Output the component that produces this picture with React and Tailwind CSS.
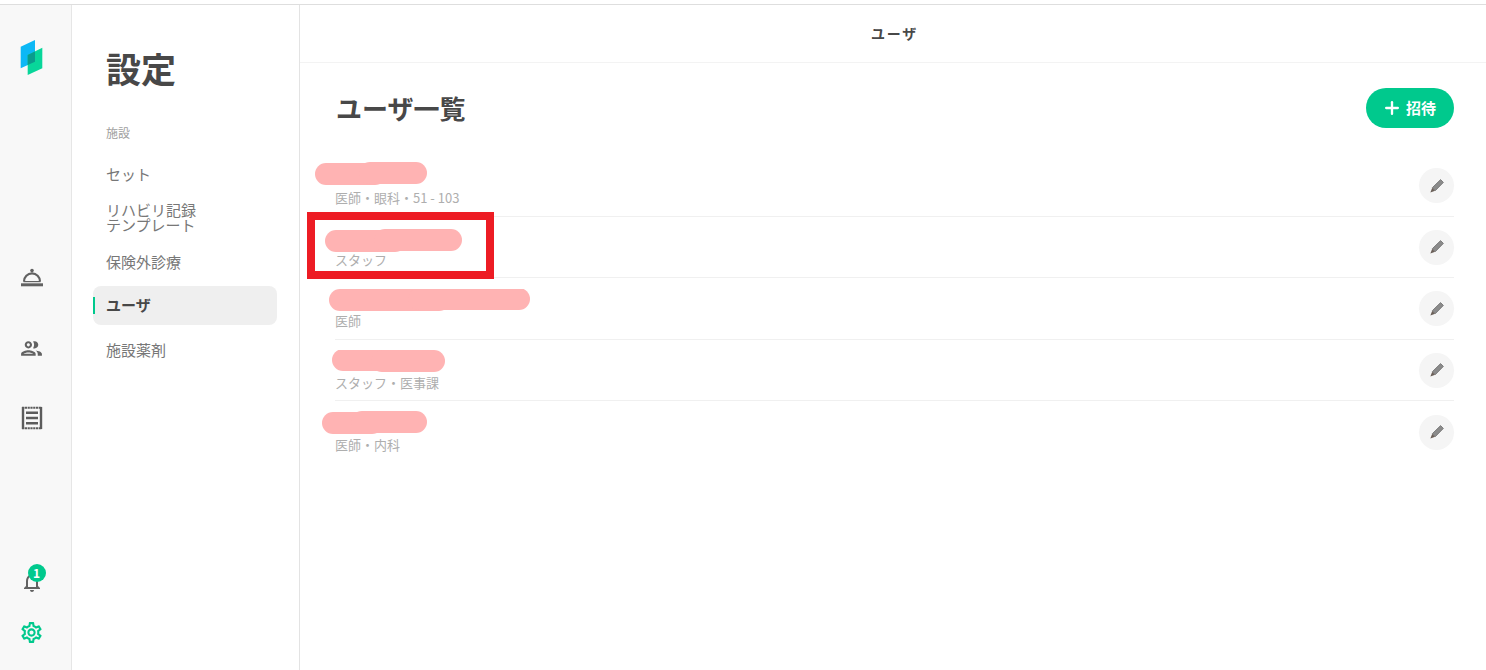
import React from "react";
import { MdOutlinePeople, MdOutlineNotifications, MdOutlineSettings } from "react-icons/md";
import { Plus } from "lucide-react";

const font = { fontFamily: '"Noto Sans CJK JP", "Noto Sans", sans-serif' };

function Logo() {
  return (
    <svg width="24" height="36" viewBox="20 39 24 36" aria-hidden="true">
      <polygon points="20.7,46.7 35,40 35,61.7 20.7,68.3" fill="#0cb8f5" />
      <polygon points="27.7,55 42.3,47.7 42.3,68.3 27.7,75" fill="#08d69a" />
      <polygon points="27.7,55 35,51.4 35,61.7 27.7,65" fill="#0a9c8c" />
    </svg>
  );
}

function ServiceIcon() {
  return (
    <svg width="24" height="20" viewBox="0 0 24 20" fill="none" stroke="#626262" aria-hidden="true">
      <circle cx="12" cy="2.6" r="1.8" fill="#626262" stroke="none" />
      <path d="M4 13.4a8 8 0 0 1 16 0" strokeWidth="2.2" />
      <path d="M3.5 13.6h17" strokeWidth="1.2" />
      <path d="M1 16.8h22" strokeWidth="3" />
    </svg>
  );
}

function ListIcon() {
  return (
    <svg width="22" height="24" viewBox="0 0 22 24" fill="none" stroke="#5c5c5c" aria-hidden="true">
      <path d="M2 1v22M20 1v22" strokeWidth="2.4" />
      <path d="M1 1.8h20M1 22.2h20" strokeWidth="2" strokeDasharray="2.2 0.6" />
      <path d="M5 6.8h12M5 12h12M5 17.2h12" strokeWidth="2.6" />
    </svg>
  );
}

function PencilIcon() {
  return (
    <svg width="16" height="16" viewBox="0 0 16 16" aria-hidden="true">
      <polygon points="3.4,9.6 11.6,1.6 14.4,4.4 6.4,12.6" fill="#8b8b8b" stroke="#6f6f6f" strokeWidth="0.8" />
      <polygon points="3.2,9.8 6.2,12.8 1.4,14.6" fill="#6a5f58" />
    </svg>
  );
}

const navItems = [
  { label: "セット" },
  { label: "リハビリ記録\nテンプレート" },
  { label: "保険外診療" },
  { label: "ユーザ", active: true },
  { label: "施設薬剤" },
];

const rows = [
  { sub: "医師・眼科・51 - 103", off: [315, 162], w: 112, paths: ["M11 12H60", "M55 11H101"] },
  { sub: "スタッフ", off: [325, 229], w: 137, paths: ["M11 12H70", "M60 11H126"] },
  { sub: "医師", off: [329, 289], w: 201, paths: ["M11 11H110", "M90 10H190"] },
  { sub: "スタッフ・医事課", off: [332, 350], w: 113, paths: ["M11 10H60", "M50 11H102"] },
  { sub: "医師・内科", off: [322, 410], w: 105, paths: ["M11 13H50", "M40 12H94"] },
];

function Row({ row, index }) {
  const last = index === rows.length - 1;
  return (
    <div className={`relative flex h-[61.5px] items-center justify-between ${last ? "" : "border-b border-[#f0f0f0]"}`}>
      <div className="flex h-full flex-col justify-end pb-[8.5px]">
        <span className="text-[13px] leading-[18px] text-[#aeaeae]">{row.sub}</span>
      </div>
      <button className="mt-[1px] flex h-[35px] w-[35px] items-center justify-center rounded-full bg-[#f5f5f5]">
        <PencilIcon />
      </button>
      <svg
        className="absolute"
        style={{ left: row.off[0] - 335, top: row.off[1] - (155 + index * 61.5) }}
        width={row.w}
        height="24"
        fill="none"
        stroke="#ffb3b3"
        strokeWidth="22"
        strokeLinecap="round"
        aria-hidden="true"
      >
        {row.paths.map((d) => (
          <path key={d} d={d} />
        ))}
      </svg>
    </div>
  );
}

export default function App() {
  return (
    <div className="h-[670px] w-[1486px] overflow-hidden bg-white pt-[4px]" style={font}>
      <div className="flex h-[666px] border-t border-[#dedede]">
        <aside className="flex w-[72px] flex-col items-center border-r border-[#e6e6e6] bg-[#f8f8f8] pb-[13px] pr-[8px] pt-[34px]">
          <Logo />
          <div className="mt-[168px] flex flex-col items-center text-[#626262]">
            <div className="flex h-[70px] items-center justify-center"><ServiceIcon /></div>
            <div className="flex h-[70px] items-center justify-center"><MdOutlinePeople size={25} /></div>
            <div className="flex h-[70px] items-center justify-center"><ListIcon /></div>
          </div>
          <div className="mt-auto flex flex-col items-center">
            <div className="relative flex h-[50px] w-[50px] items-center justify-center text-[#626262]">
              <MdOutlineNotifications size={24} />
              <span className="absolute left-[21px] top-[7px] flex h-[18px] w-[18px] items-center justify-center rounded-full bg-[#00c98d] text-[12px] font-bold leading-none text-white">1</span>
            </div>
            <div className="flex h-[50px] w-[50px] items-center justify-center text-[#00c98d]">
              <MdOutlineSettings size={25} />
            </div>
          </div>
        </aside>

        <nav className="flex w-[228px] flex-col border-r border-[#e3e3e3] pl-[21px] pr-[22px]">
          <h1 className="mt-[38px] pl-[13px] text-[35px] font-bold leading-[50px] text-[#484848]">設定</h1>
          <div className="mt-[31px] pl-[13px] text-[12px] leading-[18px] text-[#a0a0a0]">施設</div>
          <ul className="mt-[9px] flex flex-col">
            {navItems.map((item) => (
              <li key={item.label} className="flex h-[44px] items-center">
                {item.active ? (
                  <div className="relative flex h-[39px] w-full items-center rounded-[8px] bg-[#efefef] pl-[13px] text-[15px] font-bold text-[#484848]">
                    <span className="absolute left-0 top-[11px] h-[17px] w-[2px] bg-[#00c98d]" />
                    {item.label}
                  </div>
                ) : (
                  <div className="whitespace-pre-line pl-[13px] text-[15px] leading-[15px] text-[#777777]">{item.label}</div>
                )}
              </li>
            ))}
          </ul>
        </nav>

        <main className="relative flex flex-1 flex-col">
          <header className="flex h-[58px] items-center justify-center border-b border-[#f3f3f3] pl-[3px] text-[14px] font-bold tracking-[1.7px] text-[#484848]">ユーザ</header>
          <div className="flex h-[92px] items-center justify-between pb-[2px] pl-[35px] pr-[32px]">
            <h2 className="ml-[1px] text-[26px] font-bold leading-[36px] text-[#484848]">ユーザ一覧</h2>
            <button className="flex h-[40px] w-[88px] items-center justify-center gap-[4px] rounded-full bg-[#00c98d] pr-[2px] text-[15px] font-bold text-white">
              <Plus size={20} strokeWidth={2.8} />
              招待
            </button>
          </div>
          <div className="pl-[35px] pr-[32px]">
            {rows.map((row, i) => (
              <Row key={row.sub} row={row} index={i} />
            ))}
          </div>
          <div className="absolute left-[7px] top-[207px] h-[67px] w-[187px] border-[8px] border-[#ed1c24]" />
        </main>
      </div>
    </div>
  );
}
